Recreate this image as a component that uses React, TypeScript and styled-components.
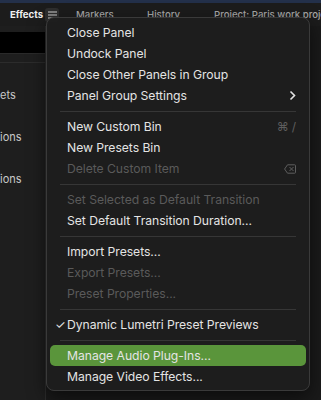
import styled, { createGlobalStyle } from 'styled-components';

const GlobalStyle = createGlobalStyle`
  html, body {
    margin: 0;
    padding: 0;
    background: #1a1a1a;
    overflow: hidden;
  }
  body {
    font-family: Inter, "Noto Sans", sans-serif;
    -webkit-font-smoothing: antialiased;
  }
`;

const StyledScreen = styled.div`
  position: relative;
  width: 321px;
  height: 400px;
  overflow: hidden;
  background: #1a1a1a;
  display: flex;
  flex-direction: column;
`;

const StyledTopStrip = styled.div`
  height: 3px;
  background: #23304a;
  flex-shrink: 0;
`;

const StyledTabBar = styled.div`
  height: 23px;
  display: flex;
  align-items: center;
  padding-left: 10px;
  background: #1c1c1c;
  flex-shrink: 0;
  white-space: nowrap;
  overflow: hidden;
`;

const StyledTab = styled.div<{ $active?: boolean; $width?: number }>`
  position: relative;
  flex-shrink: 0;
  width: ${(p) => (p.$width ? `${p.$width}px` : 'auto')};
  font-size: 9.6px;
  font-weight: ${(p) => (p.$active ? 700 : 500)};
  color: ${(p) => (p.$active ? '#f0f0f0' : '#a8a8a8')};
  height: 22px;
  line-height: 22px;

  &::after {
    content: '';
    display: ${(p) => (p.$active ? 'block' : 'none')};
    position: absolute;
    left: 0;
    width: 30px;
    bottom: -1px;
    height: 1px;
    background: #d8d8d8;
  }
`;

const StyledTabMenuButton = styled.div`
  flex-shrink: 0;
  width: 14px;
  height: 14px;
  border-radius: 3px;
  background: #2e2e2e;
  display: flex;
  align-items: center;
  justify-content: center;
  margin-right: 17px;
`;

const StyledBody = styled.div`
  flex: 1;
  display: flex;
`;

const StyledLeftPanel = styled.div`
  width: 45px;
  background: #1e1e1e;
  border-right: 1px solid #2c2c2c;
  display: flex;
  flex-direction: column;
  padding-top: 6px;
`;

const StyledSearchBox = styled.div`
  height: 21px;
  background: #000;
  border-bottom: 1px solid #2a2a2a;
  margin-bottom: 8px;
`;

const StyledFolderList = styled.div`
  border-top: 1px solid #2c2c2c;
  display: flex;
  flex-direction: column;
  padding-top: 25px;
  gap: 28px;
`;

const StyledFolder = styled.div`
  font-size: 11px;
  color: #c8c8c8;
  line-height: 14px;
`;

const StyledRightPanel = styled.div`
  flex: 1;
  background: #1a1a1a;
`;

const StyledMenu = styled.div`
  position: absolute;
  left: 46px;
  top: 17px;
  width: 262px;
  padding: 4px 0 3px;
  background: rgba(30, 30, 30, 0.98);
  border: 1px solid #3a3a3a;
  border-radius: 8px;
  box-shadow: 0 6px 18px rgba(0, 0, 0, 0.55);
  display: flex;
  flex-direction: column;
`;

const StyledItem = styled.div<{ $disabled?: boolean; $highlighted?: boolean }>`
  position: relative;
  height: 21px;
  margin: 0 3px;
  padding: 0 10px 0 17px;
  border-radius: 5px;
  display: flex;
  align-items: center;
  justify-content: space-between;
  font-size: 12.2px;
  letter-spacing: -0.05px;
  color: ${(p) => (p.$disabled ? '#5a5a5a' : '#e4e4e4')};
  background: ${(p) => (p.$highlighted ? '#5a953b' : 'transparent')};
  white-space: nowrap;
`;

const StyledCheck = styled.span`
  position: absolute;
  left: 5px;
  top: 0;
  line-height: 21px;
  font-size: 12px;
  color: #e4e4e4;
`;

const StyledShortcut = styled.span`
  font-size: 12px;
  color: #5e5e5e;
  display: flex;
  align-items: center;
  gap: 3px;
`;

const StyledSeparator = styled.div`
  height: 1px;
  margin: 4.5px 13px;
  background: #363636;
`;

function HamburgerIcon() {
  return (
    <svg width="9" height="8" viewBox="0 0 9 8">
      <path d="M0 1h9M0 4h9M0 7h9" stroke="#d0d0d0" strokeWidth="1" />
    </svg>
  );
}

function ChevronIcon() {
  return (
    <svg width="7" height="11" viewBox="0 0 7 11">
      <path d="M1.5 1.5l4 4-4 4" fill="none" stroke="#e4e4e4" strokeWidth="1.6" />
    </svg>
  );
}

function DeleteIcon() {
  return (
    <svg width="12" height="10" viewBox="0 0 12 10">
      <path
        d="M3.5 0.8h7.2a0.8 0.8 0 0 1 0.8 0.8v6.8a0.8 0.8 0 0 1-0.8 0.8H3.5L0.6 5z"
        fill="none"
        stroke="#5e5e5e"
        strokeWidth="1"
      />
      <path d="M5.5 3l4 4M9.5 3l-4 4" stroke="#5e5e5e" strokeWidth="1" />
    </svg>
  );
}

type menuEntry =
  | { kind: 'separator' }
  | {
      kind: 'item';
      label: string;
      disabled?: boolean;
      highlighted?: boolean;
      checked?: boolean;
      extra?: 'submenu' | 'shortcut' | 'delete';
    };

const menuEntries: menuEntry[] = [
  { kind: 'item', label: 'Close Panel' },
  { kind: 'item', label: 'Undock Panel' },
  { kind: 'item', label: 'Close Other Panels in Group' },
  { kind: 'item', label: 'Panel Group Settings', extra: 'submenu' },
  { kind: 'separator' },
  { kind: 'item', label: 'New Custom Bin', extra: 'shortcut' },
  { kind: 'item', label: 'New Presets Bin' },
  { kind: 'item', label: 'Delete Custom Item', disabled: true, extra: 'delete' },
  { kind: 'separator' },
  { kind: 'item', label: 'Set Selected as Default Transition', disabled: true },
  { kind: 'item', label: 'Set Default Transition Duration...' },
  { kind: 'separator' },
  { kind: 'item', label: 'Import Presets...' },
  { kind: 'item', label: 'Export Presets...', disabled: true },
  { kind: 'item', label: 'Preset Properties...', disabled: true },
  { kind: 'separator' },
  { kind: 'item', label: 'Dynamic Lumetri Preset Previews', checked: true },
  { kind: 'separator' },
  { kind: 'item', label: 'Manage Audio Plug-Ins...', highlighted: true },
  { kind: 'item', label: 'Manage Video Effects...' },
];

function App() {
  return (
    <StyledScreen>
      <GlobalStyle />
      <StyledTopStrip />
      <StyledTabBar>
        <StyledTab $active $width={35}>
          Effects
        </StyledTab>
        <StyledTabMenuButton>
          <HamburgerIcon />
        </StyledTabMenuButton>
        <StyledTab $width={71}>Markers</StyledTab>
        <StyledTab $width={67}>History</StyledTab>
        <StyledTab>Project: Paris work project</StyledTab>
      </StyledTabBar>
      <StyledBody>
        <StyledLeftPanel>
          <StyledSearchBox />
          <StyledFolderList>
            <StyledFolder>ets</StyledFolder>
            <StyledFolder>ions</StyledFolder>
            <StyledFolder>ions</StyledFolder>
          </StyledFolderList>
        </StyledLeftPanel>
        <StyledRightPanel />
      </StyledBody>

      <StyledMenu>
        {menuEntries.map((entry, index) =>
          entry.kind === 'separator' ? (
            <StyledSeparator key={index} />
          ) : (
            <StyledItem
              key={index}
              $disabled={entry.disabled}
              $highlighted={entry.highlighted}
            >
              {entry.checked && <StyledCheck>✓</StyledCheck>}
              <span>{entry.label}</span>
              {entry.extra === 'submenu' && <ChevronIcon />}
              {entry.extra === 'shortcut' && (
                <StyledShortcut>
                  <span>⌘</span>
                  <span>/</span>
                </StyledShortcut>
              )}
              {entry.extra === 'delete' && <DeleteIcon />}
            </StyledItem>
          )
        )}
      </StyledMenu>
    </StyledScreen>
  );
}

export default App;
